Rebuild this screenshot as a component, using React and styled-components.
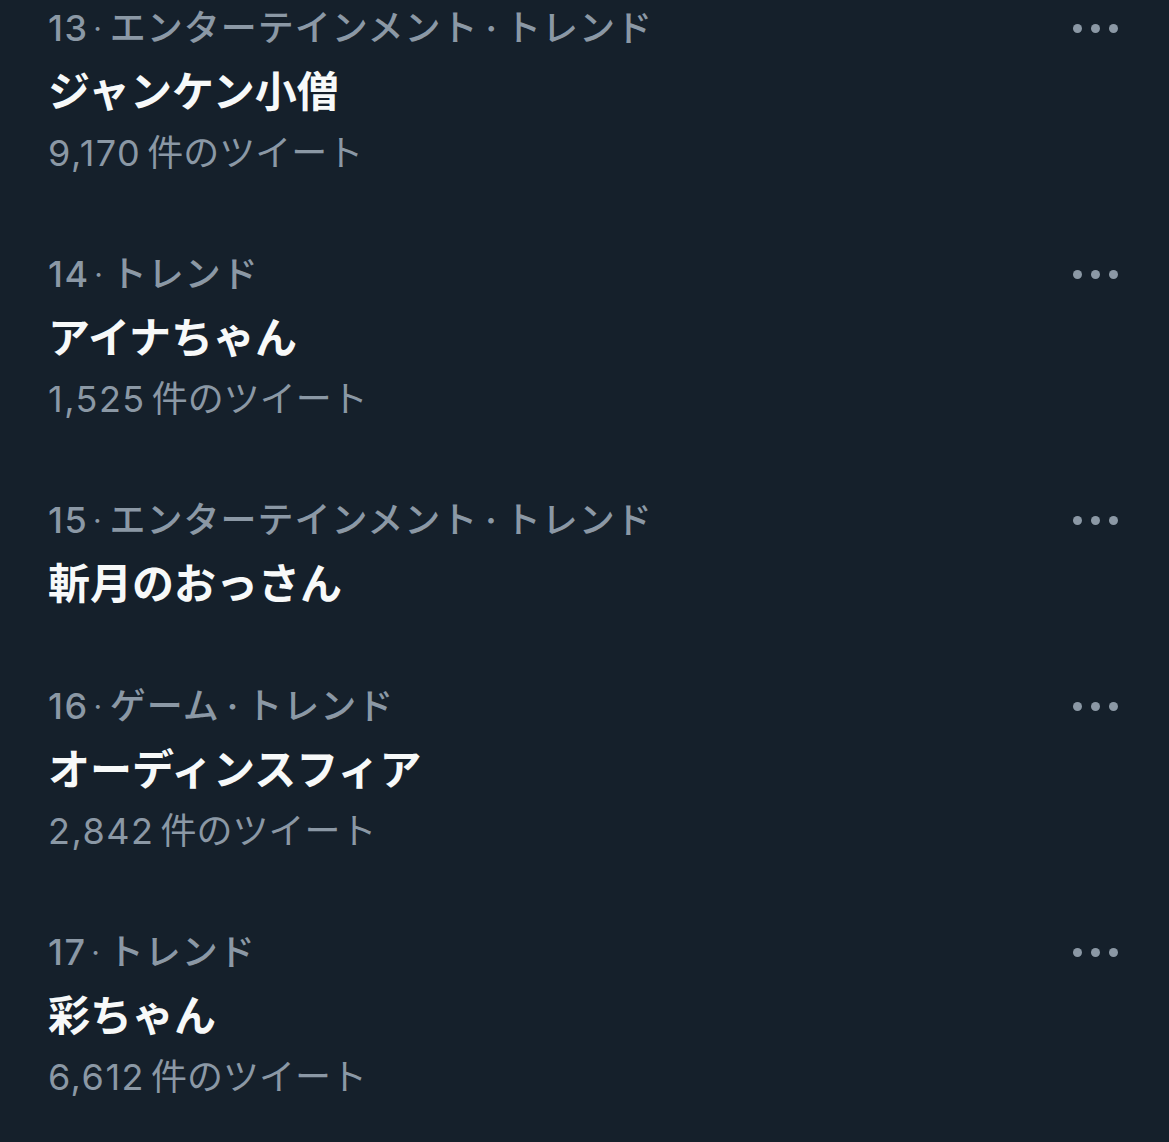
import React from 'react';
import styled, { createGlobalStyle } from 'styled-components';

const GlobalStyle = createGlobalStyle`
  body {
    margin: 0;
    background-color: #15202b;
    font-family: Inter, 'Noto Sans CJK JP', sans-serif;
  }
`;

const trends = [
  { rank: 13, tags: ['エンターテインメント', 'トレンド'], title: 'ジャンケン小僧', count: '9,170' },
  { rank: 14, tags: ['トレンド'], title: 'アイナちゃん', count: '1,525' },
  { rank: 15, tags: ['エンターテインメント', 'トレンド'], title: '斬月のおっさん' },
  { rank: 16, tags: ['ゲーム', 'トレンド'], title: 'オーディンスフィア', count: '2,842' },
  { rank: 17, tags: ['トレンド'], title: '彩ちゃん', count: '6,612' },
];

const App = () => {
  return (
    <>
      <GlobalStyle />
      <List>
        {trends.map((t) => (
          <Item key={t.rank}>
            <Top>
              <Label>
                <Num>{t.rank}</Num>
                {t.tags.map((tag, i) => (
                  <React.Fragment key={tag}>
                    <Dot first={i === 0}>·</Dot>
                    {tag}
                  </React.Fragment>
                ))}
              </Label>
              <More>
                <span />
                <span />
                <span />
              </More>
            </Top>
            <Title>{t.title}</Title>
            {t.count && (
              <Count>
                <Num>{t.count}</Num>
                <Unit>件のツイート</Unit>
              </Count>
            )}
          </Item>
        ))}
      </List>
    </>
  );
};

const List = styled.div`
  padding: 4px 51px 0 48px;
`;

const Item = styled.div`
  padding-bottom: 58px;
`;

const Top = styled.div`
  display: flex;
  align-items: center;
  justify-content: space-between;
  height: 48px;
`;

const Label = styled.div`
  color: #8b98a5;
  font-size: 36px;
  font-weight: 500;
  line-height: 48px;
  letter-spacing: 1px;
  white-space: nowrap;
`;

const Num = styled.span`
  letter-spacing: 1.5px;
`;

const Dot = styled.span`
  display: inline-block;
  font-family: Inter, sans-serif;
  font-weight: ${(p) => (p.first ? 300 : 600)};
  margin: ${(p) => (p.first ? '0 6px 0 4px' : '0 7px')};
`;

const More = styled.div`
  display: flex;
  gap: 9px;
  align-self: flex-start;
  margin-top: 20px;

  & span {
    width: 9px;
    height: 9px;
    border-radius: 50%;
    background-color: #8b98a5;
  }
`;

const Title = styled.div`
  color: #f7f9f9;
  font-size: 42px;
  font-weight: 700;
  line-height: 80px;
`;

const Count = styled.div`
  color: #8b98a5;
  font-size: 36px;
  font-weight: 400;
  line-height: 42px;
  margin-bottom: 18px;
`;

const Unit = styled.span`
  margin-left: 6px;
`;

export default App;
